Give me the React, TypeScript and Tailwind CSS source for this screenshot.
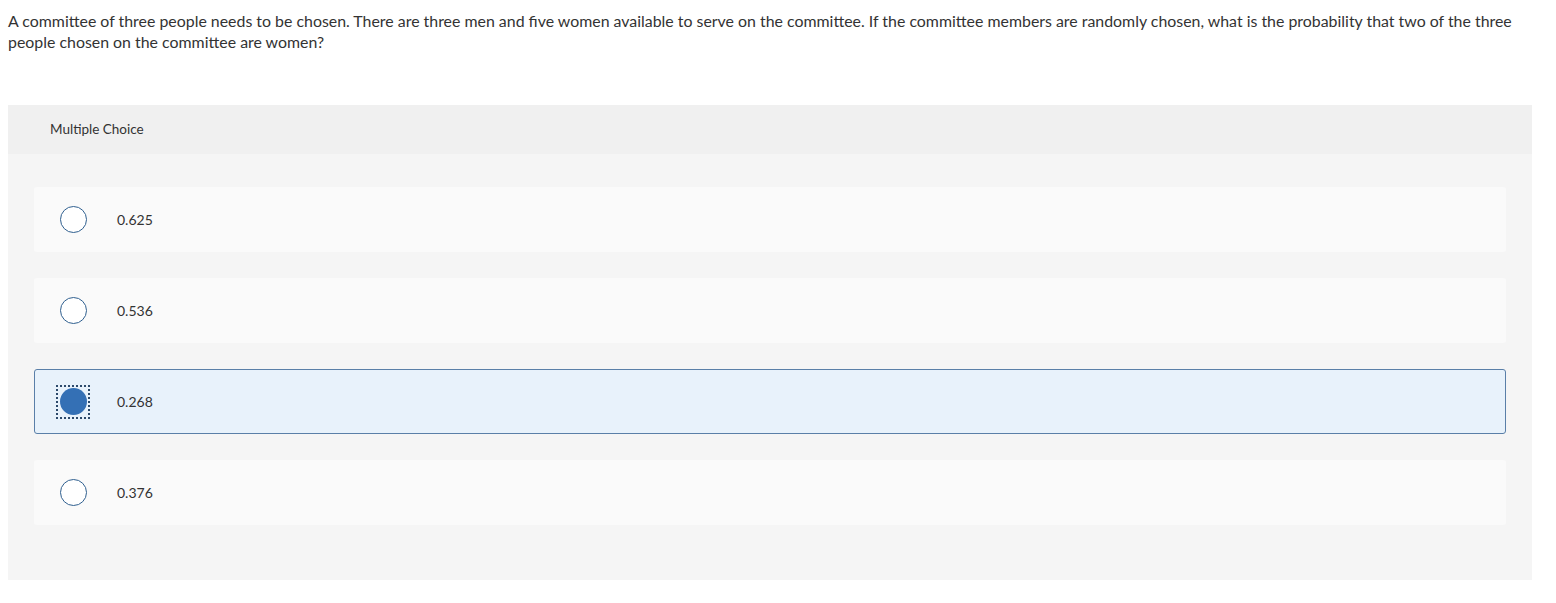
import React from "react";

const options = ["0.625", "0.536", "0.268", "0.376"];
const selected = 2;

export default function App() {
  return (
    <div className="bg-white min-h-[603px] w-[1556px] text-[#333]" style={{ fontFamily: "Lato, 'Open Sans', sans-serif" }}>
      <div className="px-2 pt-[10px] text-[15.9px] leading-[21px] text-[#333] w-[1548px]">
        A committee of three people needs to be chosen. There are three men and five women available to serve on the committee. If the committee members are randomly chosen, what is the probability that two of the three people chosen on the committee are women?
      </div>
      <div className="mt-[53px] ml-2 w-[1524px] bg-[#f5f5f5]">
        <div className="h-[49px] bg-[#f0f0f0] flex items-center pl-[42px] text-[13.5px] text-[#333]">
          Multiple Choice
        </div>
        <div className="pt-[33px] pb-[55px] px-[26px] flex flex-col gap-[26px]">
          {options.map((o, i) => {
            const sel = i === selected;
            return (
              <div
                key={o}
                className={
                  "h-[65px] flex items-center rounded-[3px] " +
                  (sel ? "bg-[#e8f2fb] border border-[#5a7fa8]" : "bg-[#fafafa] border border-transparent")
                }
              >
                <div className="w-[76px] flex justify-center items-center">
                  {sel ? (
                    <div className="w-[34px] h-[34px] border-2 border-dotted border-[#2d4a6b] flex items-center justify-center">
                      <div className="w-[27px] h-[27px] rounded-full bg-[#3470b5]" />
                    </div>
                  ) : (
                    <div className="w-[27px] h-[27px] rounded-full border border-[#2f5f8f] bg-white" />
                  )}
                </div>
                <div className="ml-[6px] text-[14px] text-[#333]">{o}</div>
              </div>
            );
          })}
        </div>
      </div>
    </div>
  );
}
